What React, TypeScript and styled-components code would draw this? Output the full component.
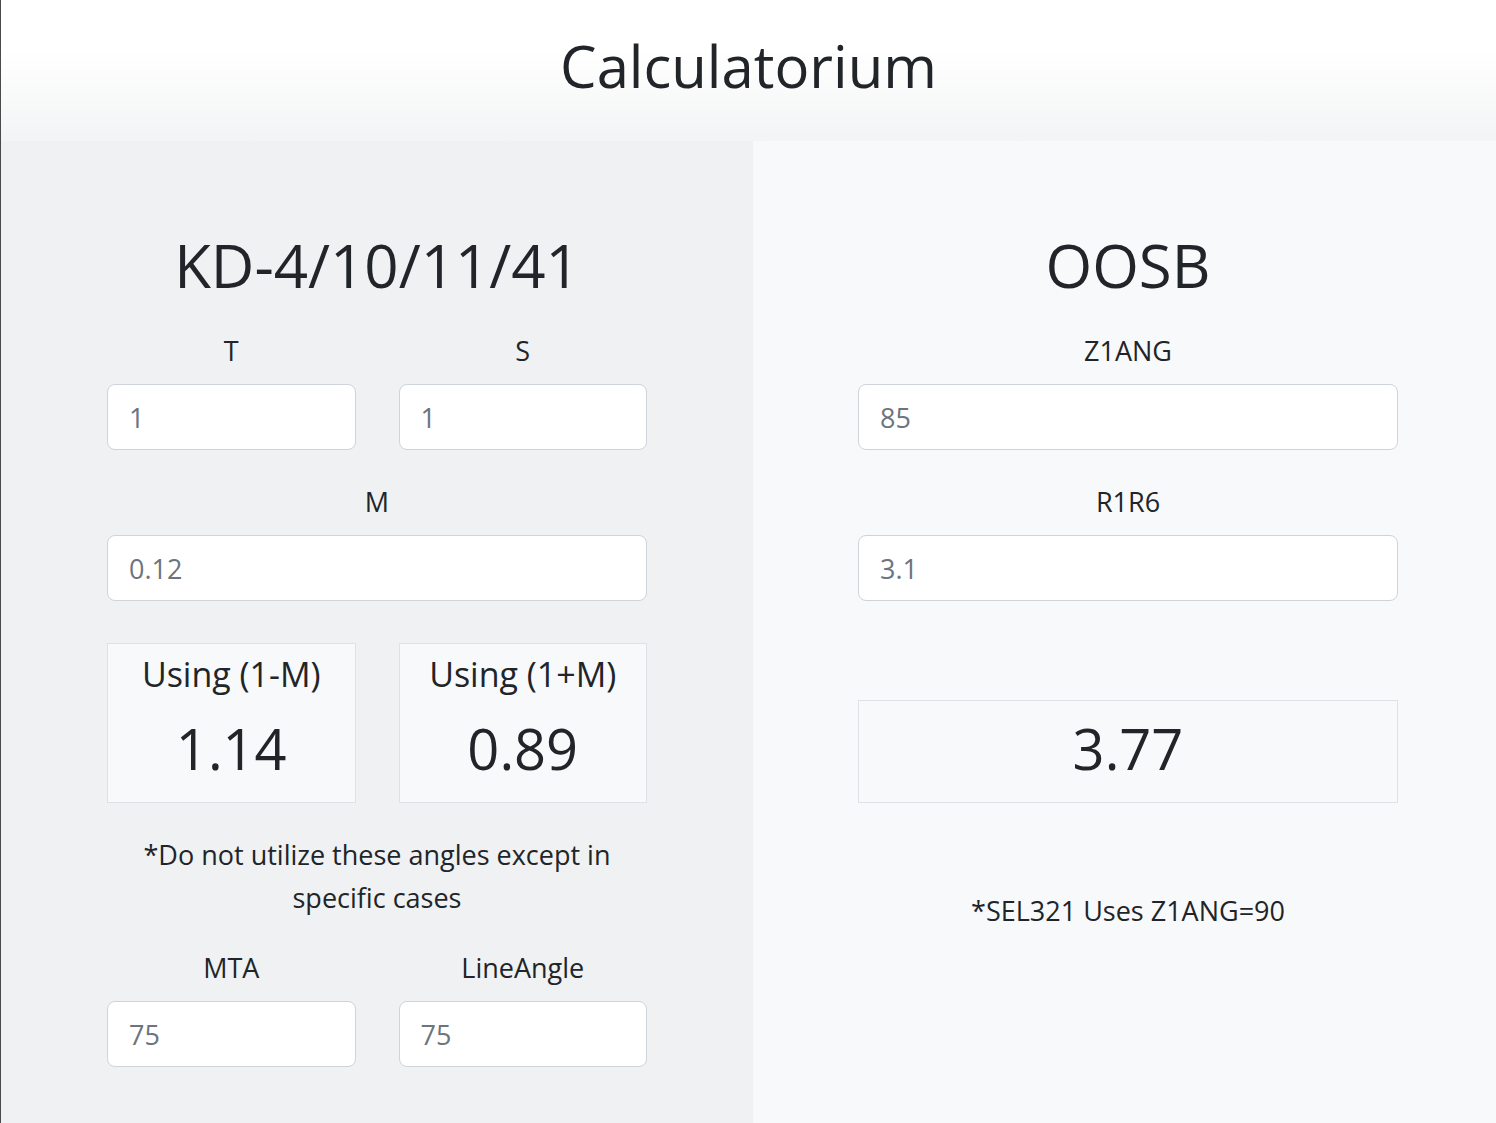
import React, { useState } from "react";
import styled, { createGlobalStyle } from "styled-components";

const GlobalStyle = createGlobalStyle`
  html, body {
    margin: 0;
    padding: 0;
  }
  body {
    font-family: "Open Sans", "Noto Sans", "Liberation Sans", sans-serif;
    color: #212529;
    background: #f8f9fa;
  }
  * {
    box-sizing: border-box;
  }
`;

function round2(n: number) {
  return (Math.round(n * 100) / 100).toFixed(2);
}

function App() {
  const [t, setT] = useState<string>("");
  const [s, setS] = useState<string>("");
  const [m, setM] = useState<string>("");
  const [mta, setMta] = useState<string>("");
  const [lineAngle, setLineAngle] = useState<string>("");
  const [z1ang, setZ1ang] = useState<string>("");
  const [r1r6, setR1r6] = useState<string>("");

  const T = parseFloat(t || "1");
  const S = parseFloat(s || "1");
  const M = parseFloat(m || "0.12");
  const minus = T / S / (1 - M);
  const plus = T / S / (1 + M);
  const Z = parseFloat(z1ang || "85");
  const R = parseFloat(r1r6 || "3.1");
  const oosb = (R / Math.cos(((90 - Z) * Math.PI) / 180)) * 1.215;

  return (
    <>
      <GlobalStyle />
      <Page>
        <Header>
          <Title>Calculatorium</Title>
        </Header>
        <Columns>
          <Panel tone="#eff1f3" shift={0}>
            <Inner>
              <PanelTitle>KD-4/10/11/41</PanelTitle>
              <Pair>
                <Field>
                  <Label>T</Label>
                  <Input placeholder="1" value={t} onChange={(e) => setT(e.target.value)} />
                </Field>
                <Field>
                  <Label>S</Label>
                  <Input placeholder="1" value={s} onChange={(e) => setS(e.target.value)} />
                </Field>
              </Pair>
              <Field>
                <Label>M</Label>
                <Input placeholder="0.12" value={m} onChange={(e) => setM(e.target.value)} />
              </Field>
              <Pair>
                <ResultCard>
                  <ResultLabel>Using (1-M)</ResultLabel>
                  <ResultValue>{round2(minus)}</ResultValue>
                </ResultCard>
                <ResultCard>
                  <ResultLabel>Using (1+M)</ResultLabel>
                  <ResultValue>{round2(plus)}</ResultValue>
                </ResultCard>
              </Pair>
              <Note>*Do not utilize these angles except in specific cases</Note>
              <Pair>
                <Field>
                  <Label>MTA</Label>
                  <Input placeholder="75" value={mta} onChange={(e) => setMta(e.target.value)} />
                </Field>
                <Field>
                  <Label>LineAngle</Label>
                  <Input
                    placeholder="75"
                    value={lineAngle}
                    onChange={(e) => setLineAngle(e.target.value)}
                  />
                </Field>
              </Pair>
            </Inner>
          </Panel>
          <Panel tone="#f8f9fa" shift={7}>
            <Inner>
              <PanelTitle>OOSB</PanelTitle>
              <Field>
                <Label>Z1ANG</Label>
                <Input placeholder="85" value={z1ang} onChange={(e) => setZ1ang(e.target.value)} />
              </Field>
              <Field>
                <Label>R1R6</Label>
                <Input placeholder="3.1" value={r1r6} onChange={(e) => setR1r6(e.target.value)} />
              </Field>
              <WideCard>
                <ResultValue>{isFinite(oosb) ? "3.77" : "-"}</ResultValue>
              </WideCard>
              <SideNote>*SEL321 Uses Z1ANG=90</SideNote>
            </Inner>
          </Panel>
        </Columns>
      </Page>
    </>
  );
}

const Page = styled.div`
  min-height: 1123px;
  border-left: 1px solid #4a4a4a;
  display: flex;
  flex-direction: column;
`;

const Header = styled.header`
  height: 141px;
  display: flex;
  align-items: center;
  justify-content: center;
  background: linear-gradient(to bottom, #ffffff 0%, #ffffff 35%, #f3f4f5 100%);
`;

const Title = styled.h1`
  margin: 0 0 10px;
  font-size: 58px;
  font-weight: 400;
  line-height: 1.2;
`;

const Columns = styled.div`
  flex: 1;
  display: grid;
  grid-template-columns: 752px 1fr;
`;

const Panel = styled.section<{ tone: string; shift: number }>`
  background: ${({ tone }) => tone};
  display: flex;
  justify-content: center;
  padding-top: 88px;
  padding-left: ${({ shift }) => shift}px;
`;

const Inner = styled.div`
  width: 540px;
  display: flex;
  flex-direction: column;
  align-items: stretch;
`;

const PanelTitle = styled.h2`
  margin: 0 0 33px;
  text-align: center;
  font-size: 60px;
  font-weight: 400;
  line-height: 72px;
`;

const Pair = styled.div`
  display: grid;
  grid-template-columns: 1fr 1fr;
  column-gap: 43px;
`;

const Field = styled.div`
  display: flex;
  flex-direction: column;
  margin-bottom: 35px;
`;

const Label = styled.label`
  text-align: center;
  font-size: 27px;
  line-height: 33px;
  margin-bottom: 17px;
`;

const Input = styled.input`
  height: 66px;
  width: 100%;
  padding: 0 21px;
  font-family: inherit;
  font-size: 27px;
  color: #495057;
  background: #ffffff;
  border: 1px solid #ced4da;
  border-radius: 8px;
  outline: none;
  &::placeholder {
    color: #6c757d;
  }
`;

const ResultCard = styled.div`
  height: 160px;
  margin-top: 7px;
  background: #f8f9fa;
  border: 1px solid #dee2e6;
  display: flex;
  flex-direction: column;
  align-items: center;
  padding-top: 8px;
`;

const WideCard = styled.div`
  height: 103px;
  margin-top: 64px;
  padding-bottom: 7px;
  background: #f8f9fa;
  border: 1px solid #dee2e6;
  display: flex;
  align-items: center;
  justify-content: center;
`;

const ResultLabel = styled.div`
  font-size: 34px;
  line-height: 44px;
  margin-bottom: 12px;
`;

const ResultValue = styled.div`
  font-size: 56px;
  line-height: 80px;
`;

const Note = styled.p`
  margin: 30px 0 32px;
  padding: 0 24px;
  text-align: center;
  font-size: 27px;
  line-height: 43px;
`;

const SideNote = styled.p`
  margin: 86px 0 0;
  text-align: center;
  font-size: 27px;
  line-height: 43px;
`;

export default App;
